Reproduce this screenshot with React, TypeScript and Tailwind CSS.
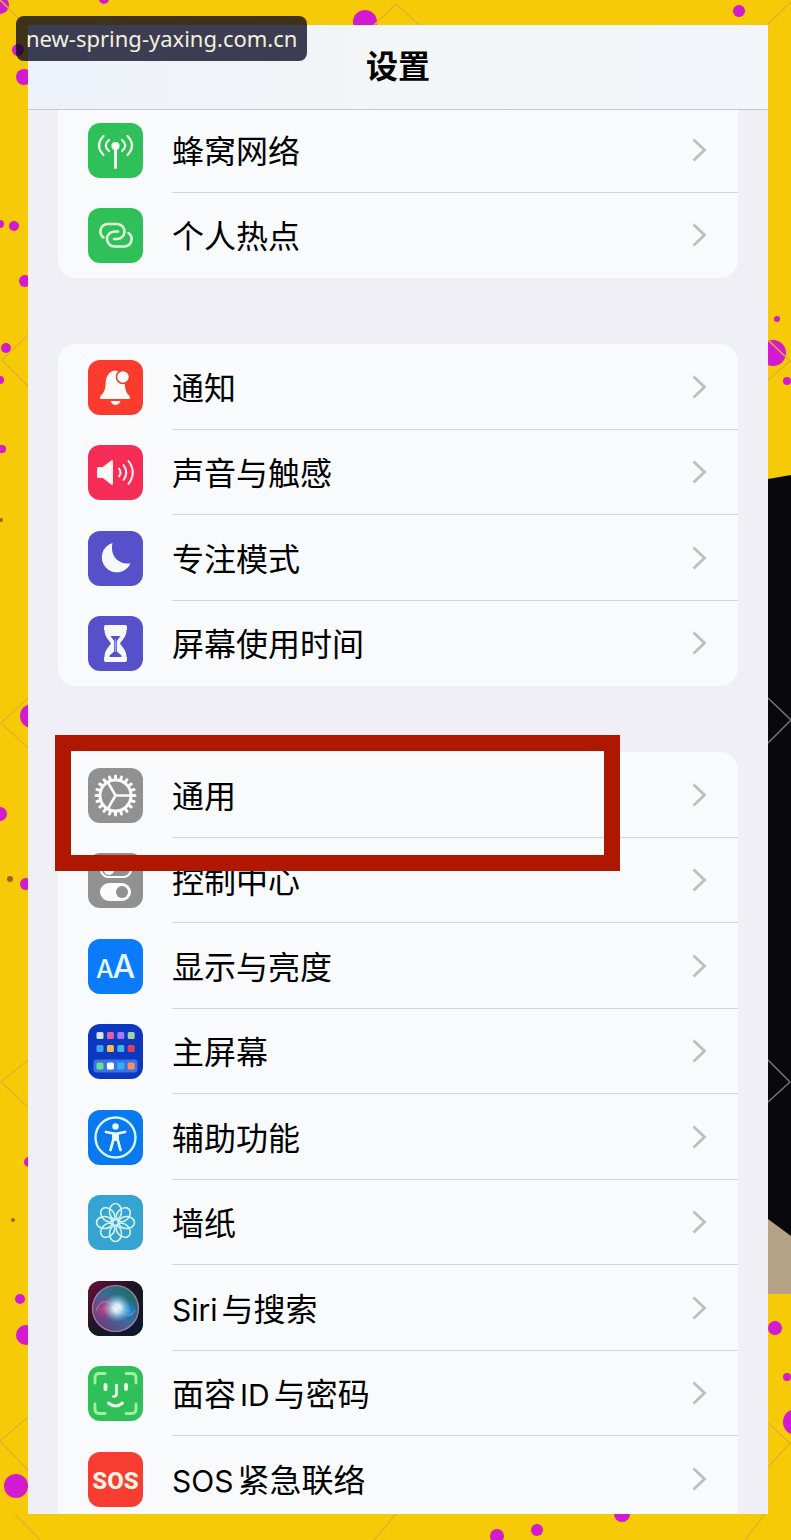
import type { ReactNode } from 'react'

interface SettingItem {
  id: string
  label: ReactNode
  tile: string
  icon: ReactNode
  highlighted?: boolean
}

// --- Icons, all drawn on a 55 x 55 tile ---
const CellularIcon = () => (
  <g fill="none" stroke="#f3fdf0" strokeWidth="2.2" strokeLinecap="round">
    <path d="M15.5 13Q6.5 22.5 15.5 32M39.5 13Q48.5 22.5 39.5 32" />
    <path d="M21 17Q14.5 22.5 21 28M34 17Q40.500 22.5 34 28" />
    <path d="M27.5 24V44.5" strokeWidth="3" />
    <circle cx="27.5" cy="23" r="3" fill="#f3fdf0" />
  </g>
)

const HotspotIcon = () => (
  <g fill="none" stroke="#dff9d8" strokeWidth="2.6" strokeLinecap="round">
    <path d="M15.5 29.5A7.5 7.5 0 0 1 19 16H29A7.5 7.5 0 0 1 29 31H26" />
    <path d="M40.5 25A7.5 7.5 0 0 1 37 38.5H26.5A7.5 7.5 0 0 1 26.5 23.5H30" />
  </g>
)

const BellIcon = () => (
  <g fill="#fffaf6">
    <path d="M27 10.500C21 11.5 18 16 17.7 23C17.5 30 15.5 33 12.5 36Q11 39 13 39H41Q43 39 41.5 36C38.5 33 37 30 36.8 23C36.5 16 33 11.5 27 10.5Z" />
    <path d="M22.5 41H32.5Q31 45 27.5 45T22.5 41Z" />
    <circle cx="35" cy="17" r="6.5" stroke="#d9432f" strokeWidth="1.5" />
  </g>
)

const SpeakerIcon = () => (
  <g fill="none" stroke="#ffeef0" strokeWidth="2" strokeLinecap="round">
    <path d="M10 23H15L24 16V39L15 32H10Z" fill="#fffaf8" strokeLinejoin="round" />
    <path d="M31 23.5Q34 27.5 31 31.5M35.5 20Q41 27.5 35.5 35M40.5 16Q49 27.5 40.5 39" />
  </g>
)

const MoonIcon = () => (
  <path d="M24.5 12C22 24 29 33.5 42.5 32.5A15 15 0 1 1 24.5 12Z" fill="#f7f8ff" />
)

const HourglassIcon = () => (
  <g>
    <path d="M17.5 9H37.5Q39 9 39 11V14H38.5C38.5 21 34 24 32 27.5C34 31 38.5 34 38.5 41H39V44Q39 46 37.5 46H17.5Q16 46 16 44V41H16.5C16.5 34 21 31 23 27.5C21 24 16.5 21 16.5 14H16V11Q16 9 17.5 9Z" fill="#f8f8ff" />
    <path d="M22.5 20H32.5L28.8 25V35.5L33.5 39.5V41H21.5V39.5L26.2 35.5V25Z" fill="#5650c9" />
    <path d="M27.5 23V36" stroke="#b9b6ee" strokeWidth="0.8" />
  </g>
)

const teeth = Array.from({ length: 20 }, (_, i) => i * 18)

const GearIcon = () => (
  <g fill="none" stroke="#fcfcfc" strokeWidth="3">
    <circle cx="27.5" cy="27.5" r="15.5" />
    <g strokeLinecap="round">
      {teeth.map(a => (
        <path key={a} d="M27.5 11V8" transform={`rotate(${a} 27.5 27.5)`} />
      ))}
    </g>
    <path d="M27.5 27.5H43M27.5 27.5L19.7 14M27.5 27.5L19.7 41" strokeWidth="2.5" />
  </g>
)

const TogglesIcon = () => (
  <g>
    <rect x="13" y="9" width="30" height="15" rx="7.5" fill="none" stroke="#fff" strokeWidth="2.2" />
    <circle cx="21" cy="17" r="5" fill="#fff" />
    <rect x="12" y="30" width="31" height="18" rx="9" fill="#fcfcfc" />
    <circle cx="34" cy="39" r="6" fill="#919191" />
  </g>
)

const TextSizeIcon = () => (
  <g fill="#e2f7ff" fontFamily="Inter, sans-serif" fontWeight="500">
    <text x="8" y="39" fontSize="25">A</text>
    <text x="24.5" y="39" fontSize="32">A</text>
  </g>
)

const appColors = [
  ['#cfe6ff', '#e4619c', '#a27bff', '#a5d0a4'],
  ['#35a5f5', '#f5bd50', '#42b6e0', '#e0405f'],
  ['#6fdc8c', '#ffffff', '#33b0f5', '#f58f60'],
]
const appRows = [8, 21, 38.5]

const HomeScreenIcon = () => (
  <g>
    <rect x="5.5" y="35.5" width="44" height="13" rx="3" fill="#3a73e6" />
    {appColors.map((row, r) =>
      row.map((c, i) => (
        <rect key={`${r}-${i}`} x={8.5 + i * 10.4} y={appRows[r]} width="7" height="7" rx="1.5" fill={c} />
      )),
    )}
  </g>
)

const AccessibilityIcon = () => (
  <g>
    <circle cx="27.5" cy="27.5" r="20" fill="none" stroke="#d6f6ff" strokeWidth="2.4" />
    <circle cx="27.5" cy="16.5" r="3.2" fill="#e6faff" />
    <path d="M18 22L25.5 23.5V29L22.5 40M37 22L29.5 23.5V29L32.5 40" fill="none" stroke="#e6faff" strokeWidth="2.8" strokeLinecap="round" strokeLinejoin="round" />
    <path d="M24.5 22.5H30.5V31H24.5Z" fill="#e6faff" />
  </g>
)

const petals = [0, 45, 90, 135, 180, 225, 270, 315]

const FlowerIcon = () => (
  <g fill="none" stroke="#d3f6f4" strokeWidth="1.6">
    {petals.map(a => (
      <ellipse key={a} cx="27.5" cy="16.5" rx="6" ry="8" transform={`rotate(${a} 27.5 27.5)`} />
    ))}
    <circle cx="27.5" cy="27.5" r="3" />
  </g>
)

const SiriIcon = () => (
  <g>
    <defs>
      <linearGradient id="siri-base" x1="0" y1="0" x2="1" y2="1">
        <stop offset="0" stopColor="#6b0f38" />
        <stop offset="0.45" stopColor="#1c1626" />
        <stop offset="1" stopColor="#071a34" />
      </linearGradient>
      <linearGradient id="siri-orb" x1="0" y1="1" x2="1" y2="0">
        <stop offset="0" stopColor="#7a2c78" />
        <stop offset="0.5" stopColor="#3c6c98" />
        <stop offset="1" stopColor="#127058" />
      </linearGradient>
      <radialGradient id="siri-pink">
        <stop offset="0" stopColor="#e04486" stopOpacity="0.9" />
        <stop offset="1" stopColor="#a82468" stopOpacity="0" />
      </radialGradient>
      <radialGradient id="siri-blue">
        <stop offset="0" stopColor="#2f9bf2" />
        <stop offset="1" stopColor="#1268c8" stopOpacity="0" />
      </radialGradient>
      <radialGradient id="siri-glow">
        <stop offset="0" stopColor="#ffffff" />
        <stop offset="0.3" stopColor="#d8fbff" stopOpacity="0.9" />
        <stop offset="1" stopColor="#7ad0e8" stopOpacity="0" />
      </radialGradient>
    </defs>
    <rect width="55" height="55" rx="12" fill="url(#siri-base)" />
    <circle cx="27.5" cy="27.5" r="23" fill="url(#siri-orb)" />
    <circle cx="17" cy="28" r="14" fill="url(#siri-pink)" />
    <circle cx="40" cy="30" r="11" fill="url(#siri-blue)" />
    <circle cx="29" cy="27" r="14" fill="url(#siri-glow)" />
    <path d="M8 30C13 16 22 20 29 27S42 38 47 29" fill="none" stroke="#e79ac4" strokeWidth="1" opacity="0.6" />
    <circle cx="27.5" cy="27.5" r="23" fill="none" stroke="#b9809f" strokeWidth="1.2" />
  </g>
)

const FaceIdIcon = () => (
  <g fill="none" stroke="#a5f0a0" strokeWidth="2.8" strokeLinecap="round">
    <path d="M7 17V12Q7 7.5 11.5 7.5H17M38 7.5H43.5Q48 7.5 48 12V17M48 38V43Q48 47.5 43.5 47.5H38M17 47.5H11.5Q7 47.5 7 43V38" />
    <g stroke="#f2fde8">
      <path d="M17.5 19V23M38 19V23" strokeWidth="3.8" />
      <path d="M28.500 19V28Q28.500 30.500 25.5 30.5" strokeWidth="2.6" />
      <path d="M20.5 37Q27.5 43 34.5 37" strokeWidth="3" />
    </g>
  </g>
)

const SosIcon = () => (
  <text x="27.5" y="36.5" textAnchor="middle" fill="#fff3e2" fontSize="24" fontWeight="800" fontFamily="Roboto, sans-serif">
    SOS
  </text>
)

const groups: SettingItem[][] = [
  [
    { id: 'cellular', label: '蜂窝网络', tile: 'bg-[#30c05a]', icon: <CellularIcon /> },
    { id: 'hotspot', label: '个人热点', tile: 'bg-[#30c05a]', icon: <HotspotIcon /> },
  ],
  [
    { id: 'notifications', label: '通知', tile: 'bg-[#fb3b2e]', icon: <BellIcon /> },
    { id: 'sounds', label: '声音与触感', tile: 'bg-[#f52c56]', icon: <SpeakerIcon /> },
    { id: 'focus', label: '专注模式', tile: 'bg-[#5650cb]', icon: <MoonIcon /> },
    { id: 'screen-time', label: '屏幕使用时间', tile: 'bg-[#5650cb]', icon: <HourglassIcon /> },
  ],
  [
    { id: 'general', label: '通用', tile: 'bg-[#919191]', icon: <GearIcon />, highlighted: true },
    { id: 'control-center', label: '控制中心', tile: 'bg-[#919191]', icon: <TogglesIcon /> },
    { id: 'display', label: '显示与亮度', tile: 'bg-[#0a7cfb]', icon: <TextSizeIcon /> },
    { id: 'home-screen', label: '主屏幕', tile: 'bg-[#0c38c0]', icon: <HomeScreenIcon /> },
    { id: 'accessibility', label: '辅助功能', tile: 'bg-[#0a78ee]', icon: <AccessibilityIcon /> },
    { id: 'wallpaper', label: '墙纸', tile: 'bg-[#35a4d2]', icon: <FlowerIcon /> },
    { id: 'siri', label: <><span className="mr-1 text-3xl">Siri</span>与搜索</>, tile: 'bg-[#1c1626]', icon: <SiriIcon /> },
    { id: 'face-id', label: <>面容<span className="mx-1 text-3xl">ID</span>与密码</>, tile: 'bg-[#30c05a]', icon: <FaceIdIcon /> },
    { id: 'sos', label: <><span className="mr-1 text-3xl">SOS</span>紧急联络</>, tile: 'bg-[#f73c32]', icon: <SosIcon /> },
  ],
]

const dots = [
  [0, 5, 9], [104, -1, 5], [365, 22, 12], [739, 11, 6], [18, 50, 6], [24, 77, 8],
  [0, 224, 4], [14, 226, 5], [25, 281, 6], [6, 348, 5], [0, 380, 4], [2, 449, 4],
  [777, 319, 3], [773, 353, 13], [787, 381, 4], [32, 716, 12], [0, 814, 7], [26, 884, 6],
  [29, 1162, 5], [20, 1299, 5], [26, 1335, 10], [16, 1486, 12], [775, 1328, 7],
  [787, 1377, 4], [796, 1422, 13], [497, 1536, 7], [537, 1530, 6], [622, 1514, 8],
]
const specks = [[1, 520, 2], [10, 879, 3], [13, 1220, 2]]

// Yellow backdrop with magenta dots and the dark figure on the right
const Backdrop = () => (
  <svg className="absolute inset-0 h-full w-full" viewBox="0 0 791 1540" preserveAspectRatio="xMidYMin slice" aria-hidden="true">
    <rect width="791" height="1540" fill="#f6ca06" />
    <path d="M768 479L791 475V1294H768Z" fill="#09080b" />
    <path d="M768 1219L791 1236V1294H768Z" fill="#b5a185" />
    {dots.map(([x, y, r]) => (
      <circle key={`${x}-${y}`} cx={x} cy={y} r={r} fill="#d21bd0" />
    ))}
    {specks.map(([x, y, r]) => (
      <circle key={`${x}-${y}`} cx={x} cy={y} r={r} fill="#a85c20" />
    ))}
    <g fill="none" stroke="#deb528" strokeWidth="1.5">
      <path d="M0 0L28 27M374 25L396 4L419 25M767 25L791 2" />
      <path d="M28 335L2 360L28 386M28 698L1 723L28 748M28 1060L1 1082L28 1107M28 1417L0 1441L28 1470" />
      <path d="M768 340L790 361L768 380M768 1423L790 1443L768 1467" />
      <path d="M15 1514L40 1540M396 1514L374 1540M745 1540L765 1514" />
    </g>
    <path d="M768 698L791 720L768 743M768 1060L790 1082L768 1102" fill="none" stroke="#77747c" strokeWidth="1.5" />
  </svg>
)

const Chevron = () => (
  <svg className="h-6 w-4 shrink-0" viewBox="0 0 16 24" fill="none" stroke="#bebebf" strokeWidth="2.8" aria-hidden="true">
    <path d="M2.5 1.5L13.5 12L2.5 22.5" />
  </svg>
)

const SettingRow = ({ item, last }: { item: SettingItem; last: boolean }) => (
  <li className="relative">
    <a href={`#${item.id}`} className="flex h-full items-center gap-[29px] pl-[30px]">
      <svg className={`h-[55px] w-[55px] shrink-0 rounded-xl ${item.tile}`} viewBox="0 0 55 55" aria-hidden="true">
        {item.icon}
      </svg>
      <span className={`flex h-full flex-1 items-center justify-between border-b pr-[31px] ${last ? 'border-transparent' : 'border-[#d6d6da]'}`}>
        <span className="pt-1 text-[32px] leading-10 text-black">{item.label}</span>
        <Chevron />
      </span>
    </a>
    {item.highlighted && (
      <span className="pointer-events-none absolute -top-[17px] right-[118px] -bottom-[33px] -left-[3px] z-10 border-16 border-[#b01700]" />
    )}
  </li>
)

const corners = ['rounded-b-[18px]', 'rounded-[18px]', 'rounded-t-[18px]']

export default function App() {
  return (
    <div className="relative flex h-screen flex-col overflow-hidden bg-[#f6ca06] pt-[25px] pr-[23px] pb-[26px] pl-[28px] font-[Inter,'Noto_Sans_CJK_SC',sans-serif]">
      <Backdrop />

      <div className="relative flex min-h-0 flex-1 flex-col overflow-hidden bg-[#f0eff5]">
        <header className="z-20 flex h-[85px] shrink-0 items-center justify-center border-b border-[#c5c8cc] bg-linear-to-r from-[#edf2fb] via-[#f4f5f6] to-[#f3f5fb]">
          <h1 className="text-[32px] leading-10 font-bold text-black">设置</h1>
        </header>

        <main className="-mt-[3px] flex min-h-0 flex-1 flex-col gap-[66px] overflow-hidden px-[30px]">
          {groups.map((items, i) => (
            <ul key={i} className={`grid shrink-0 auto-rows-[86px_85px] bg-[#f9fafc] ${corners[i]}`}>
              {items.map((item, n) => (
                <SettingRow key={item.id} item={item} last={n === items.length - 1} />
              ))}
            </ul>
          ))}
        </main>
      </div>

      <p className="absolute top-4 left-4 z-30 rounded-lg bg-[#00001a]/75 px-[10px] py-[6px] font-['Noto_Sans',sans-serif] text-[22px] leading-[33px] text-[#f3f0dc]">
        new-spring-yaxing.com.cn
      </p>
    </div>
  )
}
